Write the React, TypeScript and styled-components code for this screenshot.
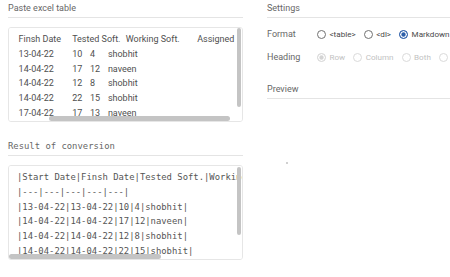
import React, { useLayoutEffect, useRef } from 'react';
import styled, { createGlobalStyle } from 'styled-components';

const GlobalStyle = createGlobalStyle`
  html, body {
    margin: 0;
    padding: 0;
    background: #fff;
    overflow: hidden;
  }
  body {
    font-family: Roboto, "Liberation Sans", sans-serif;
  }
`;

const SANS = 'Roboto, "Liberation Sans", sans-serif';
const MONO = '"DejaVu Sans Mono", "Liberation Mono", monospace';

const Page = styled.div`
  display: grid;
  grid-template-columns: 235px 235px;
  column-gap: 24px;
  padding: 2px 8px 0;
  width: max-content;
`;

const Column = styled.section`
  display: flex;
  flex-direction: column;
`;

const Heading = styled.h2<{ $mono?: boolean; $space?: number }>`
  margin: ${({ $space }) => $space ?? 0}px 0 0;
  padding-bottom: 3px;
  border-bottom: 1px solid #e4e4e4;
  font-family: ${({ $mono }) => ($mono ? MONO : SANS)};
  font-size: ${({ $mono }) => ($mono ? '8.9px' : '9px')};
  line-height: 12px;
  font-weight: 400;
  color: #676767;
  white-space: nowrap;
`;

const Frame = styled.div`
  position: relative;
  margin-top: 9px;
  height: 95px;
`;

const Box = styled.textarea<{ $mono?: boolean }>`
  display: block;
  box-sizing: border-box;
  width: 100%;
  height: 100%;
  margin: 0;
  padding: 4px 8px;
  border: 1px solid #e6e6e6;
  border-radius: 3px;
  outline: none;
  resize: none;
  white-space: pre;
  overflow: auto;
  tab-size: 8;
  scrollbar-width: none;
  font-family: ${({ $mono }) => ($mono ? MONO : SANS)};
  font-size: ${({ $mono }) => ($mono ? '8.9px' : '9px')};
  line-height: 14.8px;
  color: ${({ $mono }) => ($mono ? '#555' : '#4f4f4f')};
  background: #fff;
`;

// thin overlay scroll thumbs, as the page's own scrollbars look
const Thumb = styled.span<{ $axis: 'x' | 'y'; $start: number; $size: number }>`
  position: absolute;
  border-radius: 3px;
  background: #c4c4c4;
  ${({ $axis, $start, $size }) =>
    $axis === 'y'
      ? `right: 2px; top: ${$start}px; width: 4.5px; height: ${$size}px;`
      : `bottom: 1.5px; left: ${$start}px; height: 4.5px; width: ${$size}px;`}
`;

const OptionRow = styled.div`
  display: flex;
  align-items: center;
  height: 14px;
  margin-top: 9px;
`;

const RowLabel = styled.span`
  width: 50px;
  flex: none;
  font-size: 9px;
  color: #686868;
`;

const Options = styled.div`
  display: flex;
  align-items: center;
  gap: 8px;
`;

const Option = styled.label<{ $disabled?: boolean }>`
  display: flex;
  align-items: center;
  gap: 3.5px;
  font-size: 8.1px;
  white-space: nowrap;
  color: ${({ $disabled }) => ($disabled ? '#c2c2c2' : '#4a4a4a')};
`;

const Mark = styled.span<{ $checked?: boolean; $disabled?: boolean }>`
  flex: none;
  box-sizing: border-box;
  width: 9px;
  height: 9px;
  border-radius: 50%;
  border: 1px solid
    ${({ $checked, $disabled }) =>
      $disabled ? '#dadada' : $checked ? '#2d5fa9' : '#727272'};
  background: ${({ $checked, $disabled }) =>
    $checked ? ($disabled ? '#d4d4d4' : '#2d5fa9') : '#fff'};
  box-shadow: ${({ $checked }) => ($checked ? 'inset 0 0 0 1.3px #fff' : 'none')};
`;

const Dot = styled.span`
  display: block;
  width: 2px;
  height: 2px;
  margin: 63px 0 0 19px;
  background: #d0d0d0;
`;

// header row as copied from the sheet keeps a trailing tab
const pasted = [
  'Start Date\tFinsh Date\tTested Soft.\tWorking Soft.\tAssigned\t',
  '13-04-22\t13-04-22\t10\t4\tshobhit',
  '14-04-22\t14-04-22\t17\t12\tnaveen',
  '14-04-22\t14-04-22\t12\t8\tshobhit',
  '14-04-22\t14-04-22\t22\t15\tshobhit',
  '15-04-22\t17-04-22\t17\t13\tnaveen',
].join('\n');

const converted = [
  '|Start Date|Finsh Date|Tested Soft.|Working Soft.|Assigned|',
  '|---|---|---|---|---|',
  '|13-04-22|13-04-22|10|4|shobhit|',
  '|14-04-22|14-04-22|17|12|naveen|',
  '|14-04-22|14-04-22|12|8|shobhit|',
  '|14-04-22|14-04-22|22|15|shobhit|',
  '|15-04-22|17-04-22|17|13|naveen|',
].join('\n');

interface RadioProps {
  label: string;
  checked?: boolean;
  disabled?: boolean;
}

const Radio: React.FC<RadioProps> = ({ label, checked, disabled }) => (
  <Option $disabled={disabled}>
    <Mark $checked={checked} $disabled={disabled} />
    {label}
  </Option>
);

const App: React.FC = () => {
  const pasteRef = useRef<HTMLTextAreaElement>(null);

  // the paste box is scrolled past its first column
  useLayoutEffect(() => {
    if (pasteRef.current) pasteRef.current.scrollLeft = 51.5;
  }, []);

  return (
    <>
      <GlobalStyle />
      <Page>
        <Column>
          <Heading>Paste excel table</Heading>
          <Frame>
            <Box ref={pasteRef} wrap="off" defaultValue={pasted} spellCheck={false} />
            <Thumb $axis="y" $start={1} $size={79} />
            <Thumb $axis="x" $start={41} $size={181} />
          </Frame>
          <Heading $mono $space={18}>Result of conversion</Heading>
          <Frame>
            <Box $mono wrap="off" readOnly defaultValue={converted} spellCheck={false} />
            <Thumb $axis="y" $start={1.5} $size={68} />
            <Thumb $axis="x" $start={1} $size={152} />
          </Frame>
        </Column>
        <Column>
          <Heading>Settings</Heading>
          <OptionRow>
            <RowLabel>Format</RowLabel>
            <Options>
              <Radio label="<table>" />
              <Radio label="<dl>" />
              <Radio label="Markdown" checked />
            </Options>
          </OptionRow>
          <OptionRow>
            <RowLabel>Heading</RowLabel>
            <Options>
              <Radio label="Row" checked disabled />
              <Radio label="Column" disabled />
              <Radio label="Both" disabled />
              <Radio label="None" disabled />
            </Options>
          </OptionRow>
          <Heading $space={19}>Preview</Heading>
          <Dot />
        </Column>
      </Page>
    </>
  );
};

export default App;
